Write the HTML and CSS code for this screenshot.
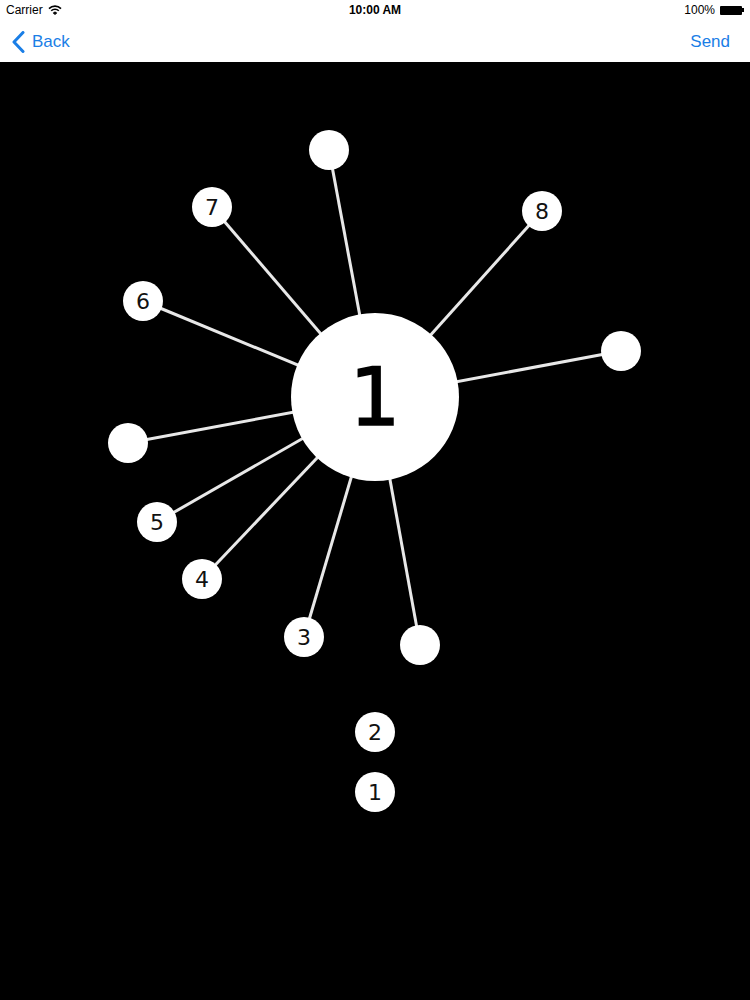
FILE: index.html
```html
<!DOCTYPE html>
<html>
<head>
<meta charset="utf-8">
<link rel="stylesheet" href="styles.css">
</head>
<body>
<div class="page">
  <div class="status">
    <div class="status-left">Carrier
      <svg class="wifi" width="14" height="10" viewBox="0 0 14 10">
        <path d="M1 3.6 A8.5 8.5 0 0 1 13 3.6" fill="none" stroke="#000" stroke-width="1.6"/>
        <path d="M3.2 5.8 A5.3 5.3 0 0 1 10.8 5.8" fill="none" stroke="#000" stroke-width="1.6"/>
        <path d="M5.3 7.9 A2.3 2.3 0 0 1 8.7 7.9 L7 9.6 Z" fill="#000" stroke="#000" stroke-width="1"/>
      </svg>
    </div>
    <div class="status-center">10:00 AM</div>
    <div class="status-right">100%
      <span class="battery"></span><span class="battery-tip"></span>
    </div>
  </div>
  <div class="nav">
    <div class="nav-back">
      <svg width="13" height="22" viewBox="0 0 13 22"><path d="M11 1.5 L2 11 L11 20.5" fill="none" stroke="#1a7ee6" stroke-width="3" stroke-linecap="round" stroke-linejoin="round"/></svg>
      <span>Back</span>
    </div>
    <div class="nav-send">Send</div>
  </div>
  <div class="stage">
    <svg class="diagram" width="750" height="938" viewBox="0 62 750 938">
      <g stroke="#e8e8e8" stroke-width="3">
        <line x1="375" y1="397" x2="329" y2="150"/>
        <line x1="375" y1="397" x2="212" y2="207"/>
        <line x1="375" y1="397" x2="542" y2="211"/>
        <line x1="375" y1="397" x2="143" y2="301"/>
        <line x1="375" y1="397" x2="621" y2="351"/>
        <line x1="375" y1="397" x2="128" y2="443"/>
        <line x1="375" y1="397" x2="157" y2="522"/>
        <line x1="375" y1="397" x2="202" y2="579"/>
        <line x1="375" y1="397" x2="304" y2="637"/>
        <line x1="375" y1="397" x2="420" y2="645"/>
      </g>
      <g fill="#fff">
        <circle cx="375" cy="397" r="84"/>
        <circle cx="329" cy="150" r="20"/>
        <circle cx="212" cy="207" r="20"/>
        <circle cx="542" cy="211" r="20"/>
        <circle cx="143" cy="301" r="20"/>
        <circle cx="621" cy="351" r="20"/>
        <circle cx="128" cy="443" r="20"/>
        <circle cx="157" cy="522" r="20"/>
        <circle cx="202" cy="579" r="20"/>
        <circle cx="304" cy="637" r="20"/>
        <circle cx="420" cy="645" r="20"/>
        <circle cx="375" cy="732" r="20"/>
        <circle cx="375" cy="792" r="20"/>
      </g>
      <g class="labels" text-anchor="middle">
        <text class="big" x="375" y="425">1</text>
        <text x="212" y="215">7</text>
        <text x="542" y="219">8</text>
        <text x="143" y="309">6</text>
        <text x="157" y="530">5</text>
        <text x="202" y="587">4</text>
        <text x="304" y="645">3</text>
        <text x="375" y="740">2</text>
        <text x="375" y="800">1</text>
      </g>
    </svg>
  </div>
</div>
</body>
</html>
```
FILE: styles.css
```css
html, body {
  margin: 0;
  padding: 0;
  background: #000;
}
.page {
  width: 750px;
  height: 1000px;
  display: flex;
  flex-direction: column;
  font-family: "Liberation Sans", Arial, sans-serif;
}
.status {
  height: 20px;
  background: #fff;
  display: flex;
  align-items: center;
  justify-content: space-between;
  padding: 0 6px;
  font-size: 12px;
  color: #000;
  position: relative;
}
.status-left {
  display: flex;
  align-items: center;
  gap: 5px;
}
.status-center {
  position: absolute;
  left: 0;
  right: 0;
  text-align: center;
  font-weight: bold;
  pointer-events: none;
}
.status-right {
  display: flex;
  align-items: center;
}
.battery {
  display: inline-block;
  width: 22px;
  height: 9px;
  background: #000;
  margin-left: 5px;
  border-radius: 1px;
}
.battery-tip {
  display: inline-block;
  width: 2px;
  height: 4px;
  background: #000;
}
.nav {
  height: 42px;
  background: #fff;
  display: flex;
  align-items: center;
  justify-content: space-between;
  padding: 2px 20px 0 12px;
  font-size: 17px;
  color: #1a7ee6;
  box-sizing: border-box;
}
.nav-back {
  display: flex;
  align-items: center;
  gap: 7px;
}
.stage {
  flex: 1;
  background: #000;
  overflow: hidden;
}
.diagram {
  display: block;
}
.labels text {
  font-family: "DejaVu Sans", Verdana, sans-serif;
  font-size: 22px;
  fill: #111;
}
.labels text.big {
  font-size: 80px;
  fill: #000;
  stroke: #000;
  stroke-width: 1.5px;
}
```
